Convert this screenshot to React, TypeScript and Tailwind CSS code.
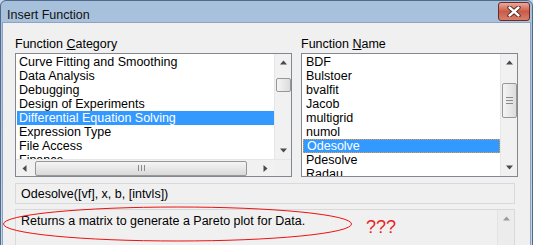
import React from "react";

const leftItems = [
  "Curve Fitting and Smoothing",
  "Data Analysis",
  "Debugging",
  "Design of Experiments",
  "Differential Equation Solving",
  "Expression Type",
  "File Access",
  "Finance",
];

const rightItems = [
  "BDF",
  "Bulstoer",
  "bvalfit",
  "Jacob",
  "multigrid",
  "numol",
  "Odesolve",
  "Pdesolve",
  "Radau",
];

type Dir = "up" | "down" | "left" | "right";

function Arrow({ dir, color = "#4a4a4a" }: { dir: Dir; color?: string }) {
  const rot = { up: 0, down: 180, left: -90, right: 90 }[dir];
  return (
    <svg width="7" height="7" viewBox="0 0 7 7" style={{ transform: `rotate(${rot}deg)` }}>
      <path d="M0 5.5 L3.5 1.5 L7 5.5 Z" fill={color} />
    </svg>
  );
}

function ScrollButton({ dir, color }: { dir: Dir; color?: string }) {
  return (
    <div className="flex h-[17px] w-[17px] shrink-0 items-center justify-center">
      <Arrow dir={dir} color={color} />
    </div>
  );
}

// vertical scrollbar, thumb placed by margin inside the track
function VScroll({ thumbTop, thumbHeight, grip }: { thumbTop: number; thumbHeight: number; grip?: boolean }) {
  return (
    <div className="flex w-[17px] flex-col border-l border-[#e6e6e6] bg-[#f1f1f1]">
      <ScrollButton dir="up" />
      <div className="flex flex-1 flex-col items-center">
        <div
          className="flex w-[15px] flex-col items-center justify-center gap-[2px] rounded-[2px] border border-[#979797] bg-gradient-to-r from-[#f5f5f5] to-[#dcdcdc]"
          style={{ marginTop: thumbTop, height: thumbHeight }}
        >
          {grip && (
            <>
              <div className="h-px w-[7px] bg-[#8a8a8a]" />
              <div className="h-px w-[7px] bg-[#8a8a8a]" />
              <div className="h-px w-[7px] bg-[#8a8a8a]" />
            </>
          )}
        </div>
      </div>
      <ScrollButton dir="down" />
    </div>
  );
}

function CloseButton() {
  return (
    <div className="flex h-[19px] w-[32px] items-center justify-center rounded-[3px] border border-[#6e2a22] bg-gradient-to-b from-[#e9a99b] via-[#c95b48] to-[#d8806c]">
      <svg width="14" height="11" viewBox="0 0 14 11">
        <path d="M2.5 1.5 L11.5 9.5 M11.5 1.5 L2.5 9.5" stroke="#4a1d18" strokeWidth="4.2" strokeLinecap="round" />
        <path d="M2.5 1.5 L11.5 9.5 M11.5 1.5 L2.5 9.5" stroke="#ffffff" strokeWidth="2.4" strokeLinecap="round" />
      </svg>
    </div>
  );
}

export default function App() {
  return (
    <div className="relative h-[245px] w-[533px] overflow-hidden bg-[#c3d6ea] font-['Liberation_Sans',Arial,sans-serif] text-[12.5px] leading-[14px] text-black">
      <div className="flex h-[260px] flex-col rounded-t-[6px] border border-[#51698a] bg-gradient-to-b from-[#a6bfdb] to-[#c4d8ec]">
        {/* Title bar */}
        <div className="flex h-[24px] items-start justify-between pl-[6px] pr-[2px] pt-px">
          <span className="pt-[6px] text-[12.5px] text-[#111]">Insert Function</span>
          <CloseButton />
        </div>

        {/* Client area */}
        <div className="mx-px flex flex-1 flex-col border border-[#8ea3be] bg-[#f0f0f0] pl-[12px] pt-[14px]">
          <div className="flex gap-[9px]">
            {/* Function Category */}
            <div className="flex w-[277px] flex-col">
              <div className="mb-[2px] h-[14px]">
                Function <span className="underline">C</span>ategory
              </div>
              <div className="flex h-[124px] flex-col border border-[#828790] bg-white">
                <div className="flex h-[105px]">
                  <div className="flex-1 overflow-hidden pl-px pt-px">
                    {leftItems.map((item, i) => (
                      <div
                        key={item}
                        className={`h-[14px] whitespace-nowrap pl-[2px] ${i === 4 ? "bg-[#3399ff] text-white" : ""}`}
                      >
                        {item}
                      </div>
                    ))}
                  </div>
                  <VScroll thumbTop={7} thumbHeight={14} />
                </div>
                <div className="flex h-[17px] border-t border-[#e6e6e6] bg-[#f1f1f1]">
                  <ScrollButton dir="left" />
                  <div className="flex flex-1 items-center">
                    <div className="ml-[2px] flex h-[15px] w-[212px] items-center justify-center gap-[2px] rounded-[2px] border border-[#979797] bg-gradient-to-b from-[#f5f5f5] to-[#d9d9d9]">
                      <div className="h-[6px] w-px bg-[#8a8a8a]" />
                      <div className="h-[6px] w-px bg-[#8a8a8a]" />
                      <div className="h-[6px] w-px bg-[#8a8a8a]" />
                    </div>
                  </div>
                  <ScrollButton dir="right" />
                  <div className="w-[17px] bg-[#f0f0f0]" />
                </div>
              </div>
            </div>

            {/* Function Name */}
            <div className="flex w-[217px] flex-col">
              <div className="mb-[2px] h-[14px]">
                Function <span className="underline">N</span>ame
              </div>
              <div className="flex h-[124px] border border-[#828790] bg-white">
                <div className="flex-1 overflow-hidden pl-px pt-px">
                  {rightItems.map((item, i) => (
                    <div
                      key={item}
                      className={`h-[14px] whitespace-nowrap pl-[3px] ${
                        i === 6 ? "border border-dotted border-[#f0a030] bg-[#3399ff] pl-[2px] leading-[12px] text-white" : ""
                      }`}
                    >
                      {item}
                    </div>
                  ))}
                </div>
                <VScroll thumbTop={12} thumbHeight={35} grip />
              </div>
            </div>
          </div>

          {/* Syntax */}
          <div className="mt-[6px] flex h-[21px] w-[500px] items-center border border-[#d9d9d9] pl-[5px]">
            Odesolve([vf], x, b, [intvls])
          </div>

          {/* Description */}
          <div className="mt-[5px] flex h-[60px] w-[500px] border border-[#d9d9d9]">
            <div className="flex-1 pl-[5px] pt-[4px]">
              Returns a matrix to generate a Pareto plot for Data.
            </div>
            <div className="flex w-[17px] flex-col border-l border-[#e3e3e3] bg-[#ececec]">
              <ScrollButton dir="up" color="#9a9a9a" />
            </div>
          </div>
        </div>
      </div>

      {/* hand-drawn annotation over the dialog */}
      <svg className="pointer-events-none absolute left-0 top-0" width="533" height="245">
        <ellipse cx="177.5" cy="224" rx="174" ry="17" fill="none" stroke="#ee1111" strokeWidth="1" />
      </svg>
      <span className="pointer-events-none absolute left-[366px] top-[217px] text-[18px] leading-[20px] text-[#ee2020]">
        ???
      </span>
    </div>
  );
}
